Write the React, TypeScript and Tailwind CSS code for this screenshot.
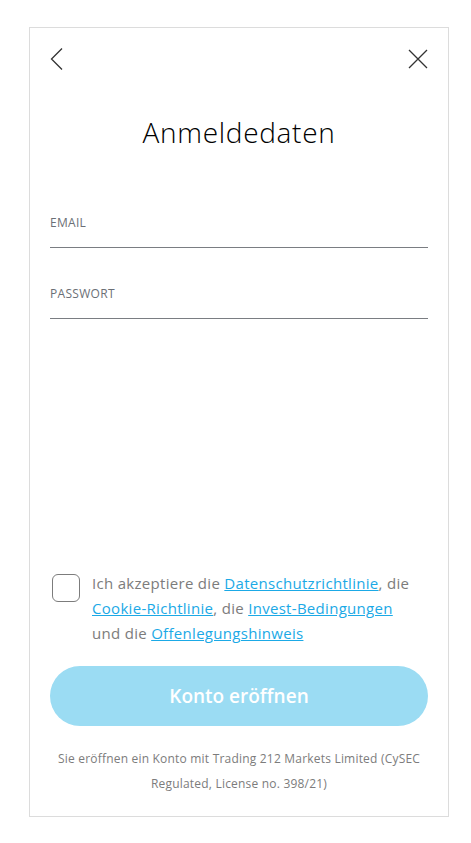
import React from "react";

const font = { fontFamily: '"Open Sans", "Noto Sans", sans-serif' };

const App: React.FC = () => {
    return (
        <div className="w-[471px] h-[843px] bg-white" style={font}>
            <div className="ml-[29px] mt-[27px] w-[420px] h-[790px] border border-[#dcdcdc] flex flex-col px-5">
                {/* top bar */}
                <div className="flex justify-between items-center pt-[19px] h-[43px]">
                    <button className="w-[24px] h-[24px] flex items-center">
                        <svg width={14} height={24} viewBox="0 0 14 24" fill="none">
                            <path d="M12 1.5L1.5 12L12 22.5" stroke="#333" strokeWidth="1.3" />
                        </svg>
                    </button>
                    <button className="w-[24px] h-[24px] flex items-center justify-end">
                        <svg width={20} height={20} viewBox="0 0 20 20" fill="none">
                            <path d="M1 1L19 19M19 1L1 19" stroke="#333" strokeWidth="1.3" />
                        </svg>
                    </button>
                </div>

                <h1 className="text-center text-[28px] font-light tracking-[0.7px] text-black mt-[41px] leading-[40px]">
                    Anmeldedaten
                </h1>

                {/* fields */}
                <div className="flex flex-col mt-[62px]">
                    <div className="flex flex-col">
                        <label className="text-[12px] font-medium text-[#6b6f76] tracking-[0.3px] leading-[18px]">
                            EMAIL
                        </label>
                        <div className="mt-[15px] border-b border-[#7a7d82]" />
                    </div>
                    <div className="flex flex-col mt-[37px]">
                        <label className="text-[12px] font-medium text-[#6b6f76] tracking-[0.3px] leading-[18px]">
                            PASSWORT
                        </label>
                        <div className="mt-[15px] border-b border-[#7a7d82]" />
                    </div>
                </div>

                <div className="flex-1" />

                {/* terms */}
                <div className="flex gap-3 items-start pl-[2px]">
                    <div className="w-[28px] h-[28px] shrink-0 rounded-[6px] border border-[#7c7c7c] mt-[1px]" />
                    <p className="text-[15px] leading-[25px] tracking-[0.3px] text-[#7c7c7c] -mt-[2px]">
                        Ich akzeptiere die{" "}
                        <a className="text-[#1ba9e6] underline">Datenschutzrichtlinie</a>, die
                        <br />
                        <a className="text-[#1ba9e6] underline">Cookie-Richtlinie</a>, die{" "}
                        <a className="text-[#1ba9e6] underline">Invest-Bedingungen</a>
                        <br />
                        und die <a className="text-[#1ba9e6] underline">Offenlegungshinweis</a>
                    </p>
                </div>

                <button className="mt-[20px] h-[60px] w-full rounded-full bg-[#9bdcf3] text-white text-[19px] font-semibold">
                    Konto eröffnen
                </button>

                <p className="mt-[20px] mb-[20px] text-center text-[12px] leading-[25px] tracking-[0.2px] text-[#7c7c7c]">
                    Sie eröffnen ein Konto mit Trading 212 Markets Limited (CySEC
                    <br />
                    Regulated, License no. 398/21)
                </p>
            </div>
        </div>
    );
};

export default App;
